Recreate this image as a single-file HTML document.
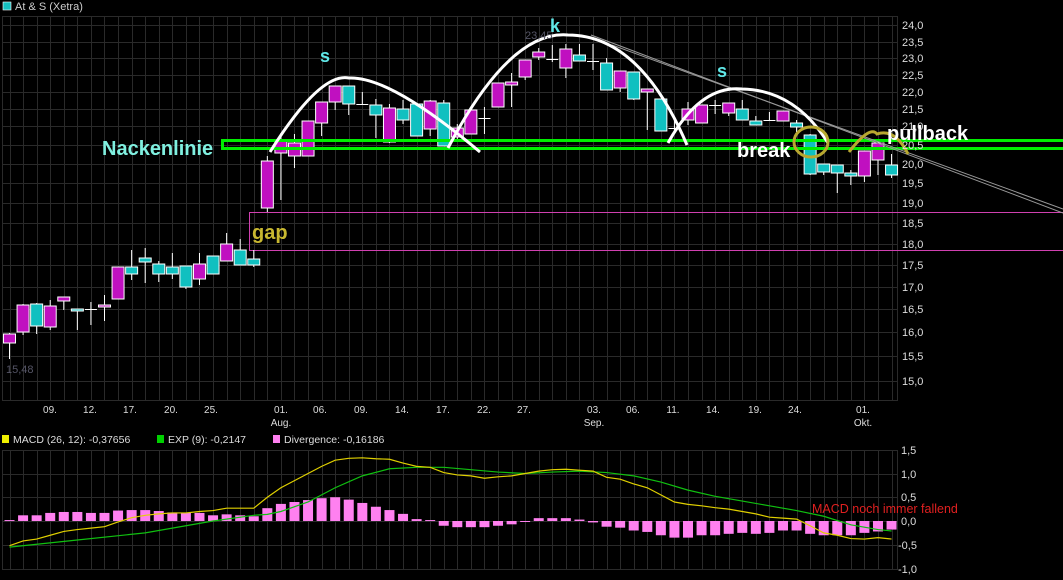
<!DOCTYPE html>
<html><head><meta charset="utf-8"><style>
html,body{margin:0;padding:0;background:#000;width:1063px;height:580px;overflow:hidden}
svg{display:block;font-family:"Liberation Sans",sans-serif}
</style></head><body>
<svg id="s" width="1063" height="580" xmlns="http://www.w3.org/2000/svg">
<rect width="1063" height="580" fill="#000"/>
<g id="grid" stroke="#2a2a2a" stroke-width="1"></g>
<rect x="2.5" y="16.5" width="895" height="384" fill="none" stroke="#2a2a2a"/>
<rect x="2.5" y="450.5" width="895" height="119" fill="none" stroke="#2a2a2a"/>
<!-- gap box -->
<path d="M1063 212.5H249.5V250.5H1063" fill="none" stroke="#d040b0" stroke-width="1"/>
<g id="candles"></g>
<!-- neckline -->
<path d="M1063 140.5H222.5V148.5H1063" fill="none" stroke="#00ee00" stroke-width="3"/>
<!-- trend lines -->
<line x1="591" y1="35" x2="1063" y2="213" stroke="#999" stroke-width="1"/>
<line x1="612" y1="45" x2="1063" y2="209" stroke="#999" stroke-width="1"/>
<!-- arcs -->
<g fill="none" stroke="#fff" stroke-width="3">
<path d="M270 152 Q 320 72 349 78 Q 390 76 480 152"/>
<path d="M448 148 Q 510 30 568 35 Q 640 35 687 145"/>
<path d="M668 143 Q 700 85 742 89 Q 795 90 828 143"/>
</g>
<ellipse cx="811" cy="142" rx="17" ry="15" fill="none" stroke="#b8a830" stroke-width="3"/>
<path d="M849 152 Q 870 125 877 134 Q 895 128 908 154" fill="none" stroke="#b8a830" stroke-width="3"/>
<!-- labels -->
<rect x="3" y="2" width="8" height="8" fill="#16c0c0" stroke="#fff" stroke-width="0.6"/>
<text x="15" y="10" font-size="11" fill="#ccc">At &amp; S (Xetra)</text>
<text x="102" y="155" font-size="20" font-weight="bold" fill="#80f0e0">Nackenlinie</text>
<text x="252" y="239" font-size="20" font-weight="bold" fill="#c8b830">gap</text>
<text x="320" y="62" font-size="18" font-weight="bold" fill="#60e8e8">s</text>
<text x="550" y="32" font-size="18" font-weight="bold" fill="#60e8e8">k</text>
<text x="717" y="77" font-size="18" font-weight="bold" fill="#60e8e8">s</text>
<text x="525" y="39" font-size="11" fill="#556">23,45</text>
<text x="6" y="373" font-size="11" fill="#556">15,48</text>
<text x="737" y="157" font-size="20" font-weight="bold" fill="#fff">break</text>
<text x="887" y="140" font-size="20" font-weight="bold" fill="#fff">pullback</text>
<g font-size="11" fill="#ddd">
<text x="902" y="29">24,0</text><text x="902" y="46">23,5</text><text x="902" y="62">23,0</text><text x="902" y="79">22,5</text><text x="902" y="96">22,0</text><text x="902" y="113">21,5</text><text x="902" y="130">21,0</text><text x="902" y="149">20,5</text><text x="902" y="168">20,0</text><text x="902" y="187">19,5</text><text x="902" y="207">19,0</text><text x="902" y="227">18,5</text><text x="902" y="248">18,0</text><text x="902" y="269">17,5</text><text x="902" y="291">17,0</text><text x="902" y="313">16,5</text><text x="902" y="336">16,0</text><text x="902" y="360">15,5</text><text x="902" y="385">15,0</text>
</g>
<g font-size="10" fill="#ddd" text-anchor="middle">
<text x="50" y="413">09.</text><text x="90" y="413">12.</text><text x="130" y="413">17.</text><text x="171" y="413">20.</text><text x="211" y="413">25.</text><text x="281" y="413">01.</text><text x="320" y="413">06.</text><text x="361" y="413">09.</text><text x="402" y="413">14.</text><text x="443" y="413">17.</text><text x="484" y="413">22.</text><text x="524" y="413">27.</text><text x="594" y="413">03.</text><text x="633" y="413">06.</text><text x="673" y="413">11.</text><text x="713" y="413">14.</text><text x="755" y="413">19.</text><text x="795" y="413">24.</text><text x="863" y="413">01.</text>
<text x="281" y="426">Aug.</text><text x="594" y="426">Sep.</text><text x="863" y="426">Okt.</text>
</g>
<rect x="2" y="435" width="7" height="8" fill="#f0f000"/>
<text x="13" y="443" font-size="10.5" fill="#ddd">MACD (26, 12): -0,37656</text>
<rect x="157" y="435" width="7" height="8" fill="#00d000"/>
<text x="168" y="443" font-size="10.5" fill="#ddd">EXP (9): -0,2147</text>
<rect x="273" y="435" width="7" height="8" fill="#ff80f0"/>
<text x="284" y="443" font-size="10.5" fill="#ddd">Divergence: -0,16186</text>
<g font-size="11" fill="#ddd">
<text x="901" y="454">1,5</text><text x="901" y="478">1,0</text><text x="901" y="501">0,5</text><text x="901" y="525">0,0</text><text x="898" y="549">-0,5</text><text x="898" y="573">-1,0</text>
</g>
<g id="macd"></g>
<text x="812" y="513" font-size="12.5" fill="#e02020">MACD noch immer fallend</text>
</svg>
<script>
var NS="http://www.w3.org/2000/svg";
function el(p,t,a){var e=document.createElementNS(NS,t);for(var k in a)e.setAttribute(k,a[k]);p.appendChild(e);return e;}
var X=function(i){return 9.5+i*13.57;};
var g=document.getElementById('grid');
[25,42,58,75,92,109,126,145,164,183,203,223,244,265,287,309,332,356,381,474,497,521,545].forEach(function(y){el(g,'line',{x1:2,x2:898,y1:y+.5,y2:y+.5});});
for(var i=0;i<66;i++){var x=Math.round(X(i))+.5;el(g,'line',{x1:x,x2:x,y1:16,y2:400});el(g,'line',{x1:x,x2:x,y1:450,y2:570});}
// [top,bottom,color,wickTop,wickBot]
var C=[[334,343,'m',333,359],[305,332,'m',304,335],[304,326,'c',303,334],[306,327,'m',300,330],[297,301,'m',297,310],[309,311,'c',309,330],[309,309,'d',302,325],[305,307,'m',295,321],[267,299,'m',267,299],[267,274,'c',250,280],[258,262,'c',248,283],[264,274,'c',261,282],[267,274,'c',253,279],[266,287,'c',266,289],[264,279,'m',253,285],[256,274,'c',256,274],[244,261,'m',233,261],[250,265,'c',239,265],[259,265,'c',250,267],
[161,208,'m',156,212],[140,153,'m',133,200],[143,156,'m',134,168],[121,156,'m',121,156],[102,123,'m',102,136],[86,102,'m',86,110],[86,104,'c',86,115],[104,104,'d',92,104],[105,115,'c',99,138],[108,142,'m',104,143],[109,120,'c',100,124],[104,136,'c',104,136],[101,129,'m',100,136],[103,146,'c',100,146],[128,137,'m',124,140],[110,134,'m',110,134],[118,118,'d',107,134],
[83,107,'m',83,107],[82,85,'m',73,107],[60,77,'m',60,80],[52,57,'m',48,60],[59,59,'d',45,62],[49,68,'m',44,78],[55,61,'c',44,61],[61,61,'d',44,70],[63,90,'c',58,90],[71,88,'m',71,92],[72,99,'c',72,100],[89,92,'m',89,130],[99,131,'c',99,131],[128,128,'d',120,133],
[109,120,'m',102,125],[105,123,'m',105,123],[105,105,'d',100,114],[103,113,'m',103,116],[109,120,'c',100,120],[121,125,'c',116,125],[120,120,'d',112,120],[111,121,'m',111,121],[123,127,'c',120,132],[135,174,'c',134,175],[164,172,'c',164,175],[165,173,'c',165,193],[173,176,'c',170,185],[151,176,'m',151,182],[143,160,'m',140,175],[165,175,'c',154,178]];
var cg=document.getElementById('candles');
C.forEach(function(c,i){var x=X(i);el(cg,'line',{x1:x,x2:x,y1:c[3],y2:c[4],stroke:'#fff','stroke-width':1});
 if(c[2]=='d'){el(cg,'line',{x1:x-6,x2:x+6,y1:c[0]+.5,y2:c[0]+.5,stroke:'#fff','stroke-width':1});}
 else el(cg,'rect',{x:x-6,y:c[0],width:12,height:Math.max(2,c[1]-c[0]),fill:c[2]=='m'?'#c010c0':'#10c0c0',stroke:'#fff','stroke-width':1});});
var Y=function(v){return 521-v*47.5;};
var D=[0.02,0.12,0.12,0.17,0.19,0.19,0.17,0.17,0.22,0.23,0.23,0.21,0.18,0.17,0.17,0.12,0.14,0.12,0.1,0.27,0.36,0.4,0.44,0.48,0.5,0.45,0.38,0.3,0.23,0.15,0.04,0.02,-0.1,-0.13,-0.13,-0.13,-0.1,-0.07,-0.02,0.06,0.06,0.06,0.03,-0.03,-0.12,-0.14,-0.2,-0.23,-0.3,-0.35,-0.35,-0.3,-0.3,-0.27,-0.25,-0.27,-0.25,-0.2,-0.2,-0.27,-0.3,-0.3,-0.3,-0.25,-0.22,-0.18];
var mg=document.getElementById('macd');
D.forEach(function(v,i){var x=X(i);var y0=Y(0),y1=Y(v);el(mg,'rect',{x:x-5,y:Math.min(y0,y1),width:10,height:Math.max(1,Math.abs(y1-y0)),fill:'#ff80f0'});});
var M=[-0.52,-0.42,-0.38,-0.3,-0.22,-0.18,-0.15,-0.12,-0.02,0.07,0.12,0.15,0.17,0.17,0.2,0.22,0.27,0.27,0.27,0.5,0.7,0.85,1.0,1.15,1.28,1.32,1.33,1.31,1.3,1.22,1.15,1.13,1.02,0.97,0.95,0.9,0.93,0.95,1.0,1.05,1.08,1.09,1.07,1.05,0.92,0.88,0.78,0.7,0.55,0.4,0.35,0.32,0.28,0.25,0.2,0.15,0.08,0.06,0.04,-0.1,-0.25,-0.3,-0.37,-0.38,-0.35,-0.38];
var E=[[0,-0.55],[5,-0.4],[10,-0.25],[15,0.0],[18,0.12],[19,0.14],[20,0.2],[22,0.4],[24,0.7],[26,0.95],[28,1.1],[30,1.13],[32,1.13],[34,1.08],[36,1.03],[38,1.0],[40,1.03],[42,1.05],[44,1.02],[46,0.95],[48,0.82],[50,0.65],[52,0.52],[54,0.42],[56,0.32],[58,0.22],[60,0.1],[62,-0.08],[64,-0.18],[65,-0.21]];
el(mg,'polyline',{points:E.map(function(p){return X(p[0])+','+Y(p[1]);}).join(' '),fill:'none',stroke:'#10c010','stroke-width':1.2});
el(mg,'polyline',{points:M.map(function(v,i){return X(i)+','+Y(v);}).join(' '),fill:'none',stroke:'#e0d000','stroke-width':1.2});
</script>
</body></html>
